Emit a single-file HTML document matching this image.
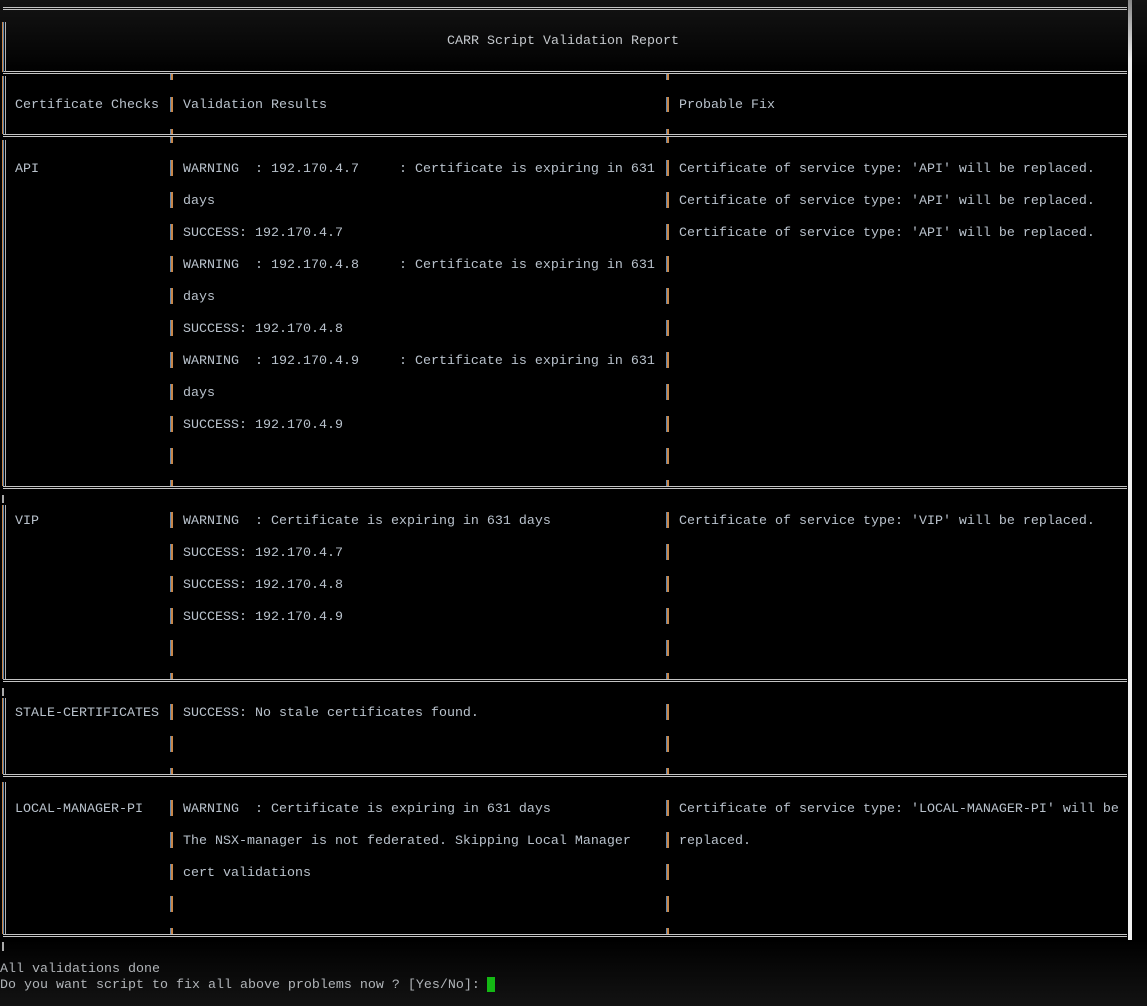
<!DOCTYPE html>
<html><head><meta charset="utf-8"><style>
html,body{margin:0;padding:0;width:1147px;height:1006px;overflow:hidden;background:#000;}
body{position:relative;font-family:"Liberation Mono",monospace;font-size:13.33px;color:#b9c2cc;}
.t{position:absolute;line-height:16px;white-space:pre;margin-top:2px;}
.bg{position:absolute;left:0;width:1147px;}
.ln{position:absolute;left:3px;width:1124px;height:1px;border-top:1px solid #c4c4c4;border-bottom:1px solid #c4c4c4;}
.b{position:absolute;width:3px;background:repeating-linear-gradient(to bottom,transparent 0 16px,#000 16px 32px),linear-gradient(to right,#5f87b0 0 1px,#c8874a 1px 3px);}
.s{position:absolute;width:3px;background:linear-gradient(to right,#5f87b0 0 1px,#c8874a 1px 3px);}
.lv{position:absolute;left:2px;width:2px;background:linear-gradient(to right,#c8874a 0 1px,#5f87b0 1px 2px);}
.lg{position:absolute;left:5px;width:1px;background:#b0b0b0;}
</style></head><body>
<div class="bg" style="top:0;height:75px;background:linear-gradient(#141414,#000)"></div>
<div class="bg" style="top:940px;height:66px;background:linear-gradient(#000,#131313)"></div>
<div style="position:absolute;left:1128px;top:0;width:4px;height:940px;background:linear-gradient(#888,#eee 60px,#f0f0f0)"></div>

<div class="ln" style="top:7px"></div>
<div class="ln" style="top:71px"></div>
<div class="ln" style="top:134px"></div>
<div class="ln" style="top:486px"></div>
<div class="ln" style="top:679px"></div>
<div class="ln" style="top:774px"></div>
<div class="ln" style="top:934px"></div>

<div class="lv" style="top:22px;height:50px"></div><div class="lg" style="top:22px;height:50px"></div>
<div class="lv" style="top:76px;height:58px"></div><div class="lg" style="top:76px;height:58px"></div>
<div class="lv" style="top:140px;height:346px"></div><div class="lg" style="top:140px;height:346px"></div>
<div class="lv" style="top:495px;height:8px;background:#aaa"></div>
<div class="lv" style="top:505px;height:174px"></div><div class="lg" style="top:505px;height:174px"></div>
<div class="lv" style="top:688px;height:8px;background:#aaa"></div>
<div class="lv" style="top:698px;height:76px"></div><div class="lg" style="top:698px;height:76px"></div>
<div class="lv" style="top:782px;height:152px"></div><div class="lg" style="top:782px;height:152px"></div>
<div class="lv" style="top:942px;height:9px;background:#aaa"></div>

<div class="t" style="left:447px;top:32px;color:#c4c8cc">CARR Script Validation Report</div>

<div class="s" style="left:170px;top:74px;height:6px"></div><div class="s" style="left:666px;top:74px;height:6px"></div>
<div class="s" style="left:170px;top:129px;height:5px"></div><div class="s" style="left:666px;top:129px;height:5px"></div>
<div class="s" style="left:170px;top:137px;height:6px"></div><div class="s" style="left:666px;top:137px;height:6px"></div>
<div class="s" style="left:170px;top:480px;height:6px"></div><div class="s" style="left:666px;top:480px;height:6px"></div>
<div class="s" style="left:170px;top:673px;height:6px"></div><div class="s" style="left:666px;top:673px;height:6px"></div>
<div class="s" style="left:170px;top:768px;height:6px"></div><div class="s" style="left:666px;top:768px;height:6px"></div>
<div class="s" style="left:170px;top:928px;height:6px"></div><div class="s" style="left:666px;top:928px;height:6px"></div>

<div class="b" style="left:170px;top:97px;height:15px"></div><div class="b" style="left:666px;top:97px;height:15px"></div>
<div class="b" style="left:170px;top:160px;height:304px"></div><div class="b" style="left:666px;top:160px;height:304px"></div>
<div class="b" style="left:170px;top:512px;height:144px"></div><div class="b" style="left:666px;top:512px;height:144px"></div>
<div class="b" style="left:170px;top:704px;height:48px"></div><div class="b" style="left:666px;top:704px;height:48px"></div>
<div class="b" style="left:170px;top:800px;height:112px"></div><div class="b" style="left:666px;top:800px;height:112px"></div>

<div class="t" style="left:15px;top:96px">Certificate Checks</div>
<div class="t" style="left:183px;top:96px">Validation Results</div>
<div class="t" style="left:679px;top:96px">Probable Fix</div>

<div class="t" style="left:15px;top:160px">API</div>
<div class="t" style="left:183px;top:160px">WARNING  : 192.170.4.7     : Certificate is expiring in 631</div>
<div class="t" style="left:183px;top:192px">days</div>
<div class="t" style="left:183px;top:224px">SUCCESS: 192.170.4.7</div>
<div class="t" style="left:183px;top:256px">WARNING  : 192.170.4.8     : Certificate is expiring in 631</div>
<div class="t" style="left:183px;top:288px">days</div>
<div class="t" style="left:183px;top:320px">SUCCESS: 192.170.4.8</div>
<div class="t" style="left:183px;top:352px">WARNING  : 192.170.4.9     : Certificate is expiring in 631</div>
<div class="t" style="left:183px;top:384px">days</div>
<div class="t" style="left:183px;top:416px">SUCCESS: 192.170.4.9</div>
<div class="t" style="left:679px;top:160px">Certificate of service type: 'API' will be replaced.</div>
<div class="t" style="left:679px;top:192px">Certificate of service type: 'API' will be replaced.</div>
<div class="t" style="left:679px;top:224px">Certificate of service type: 'API' will be replaced.</div>

<div class="t" style="left:15px;top:512px">VIP</div>
<div class="t" style="left:183px;top:512px">WARNING  : Certificate is expiring in 631 days</div>
<div class="t" style="left:183px;top:544px">SUCCESS: 192.170.4.7</div>
<div class="t" style="left:183px;top:576px">SUCCESS: 192.170.4.8</div>
<div class="t" style="left:183px;top:608px">SUCCESS: 192.170.4.9</div>
<div class="t" style="left:679px;top:512px">Certificate of service type: 'VIP' will be replaced.</div>

<div class="t" style="left:15px;top:704px">STALE-CERTIFICATES</div>
<div class="t" style="left:183px;top:704px">SUCCESS: No stale certificates found.</div>

<div class="t" style="left:15px;top:800px">LOCAL-MANAGER-PI</div>
<div class="t" style="left:183px;top:800px">WARNING  : Certificate is expiring in 631 days</div>
<div class="t" style="left:183px;top:832px">The NSX-manager is not federated. Skipping Local Manager</div>
<div class="t" style="left:183px;top:864px">cert validations</div>
<div class="t" style="left:679px;top:800px">Certificate of service type: 'LOCAL-MANAGER-PI' will be</div>
<div class="t" style="left:679px;top:832px">replaced.</div>

<div class="t" style="left:0;top:960px;color:#b0b4b8">All validations done</div>
<div class="t" style="left:0;top:976px;color:#b0b4b8">Do you want script to fix all above problems now ? [Yes/No]: </div>
<div style="position:absolute;left:487px;top:977px;width:8px;height:15px;background:#14b814"></div>
</body></html>
